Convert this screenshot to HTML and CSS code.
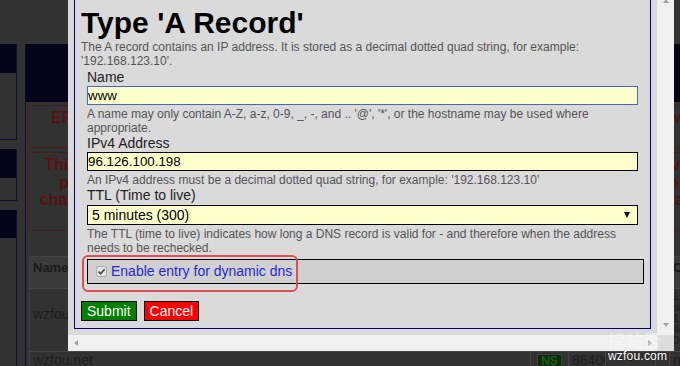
FILE: index.html
```html
<!DOCTYPE html>
<html>

<head>
    <meta charset="UTF-8">
    <meta name="viewport" content="width=device-width, initial-scale=1">
    <link rel="stylesheet" href="styles.css">
    <title>DNS records - wzfou.net</title>
</head>

<body>
    <div class="page">
        <div class="side">
            <div class="side-box">
                <div class="side-head"></div>
                <div class="side-body first"></div>
            </div>
            <div class="side-box">
                <div class="side-head"></div>
                <div class="side-body second"></div>
            </div>
            <div class="side-box last">
                <div class="side-head"></div>
                <div class="side-body"></div>
            </div>
        </div>

        <div class="main">
            <div class="banner"></div>
            <div class="notice error">ERROR: the name servers of this domain do not point to our DNS servers right now</div>
            <div class="notice warn">
                This domain is not using our name servers yet, so none of the records below are live.<br>
                please set them at your registrar, then wait for the name servers of this domain to<br>
                change to spread over the internet before testing the records below on this page again
            </div>

            <table class="records">
                <tr>
                    <th class="c-name">Name</th>
                    <th class="c-type">Type</th>
                    <th class="c-ttl">TTL</th>
                    <th class="c-prio">Prio</th>
                    <th class="c-weight"></th>
                    <th class="c-content">Content</th>
                </tr>
                <tr class="soa">
                    <td class="name">wzfou.net</td>
                    <td>SOA</td>
                    <td>86400</td>
                    <td class="dash">-</td>
                    <td></td>
                    <td class="content">1.wzfou.net<br>status<br>1:2019092901<br>4(14400)<br>0(3600)</td>
                </tr>
                <tr class="ns">
                    <td class="name">wzfou.net</td>
                    <td class="type"><span class="badge">NS</span></td>
                    <td>86400</td>
                    <td class="dash">-</td>
                    <td></td>
                    <td>ns1.linode.com</td>
                </tr>
            </table>
        </div>
    </div>

    <div class="dialog">
        <div class="viewport">
            <form class="record-form">
                <h1>Type 'A Record'</h1>
                <p class="intro">The A record contains an IP address. It is stored as a decimal dotted quad string, for example: '192.168.123.10'.</p>

                <div class="field">
                    <label for="recordName">Name</label>
                    <input type="text" id="recordName" class="text focused" value="www">
                    <p class="help">A name may only contain A-Z, a-z, 0-9, _, -, and .. '@', '*', or the hostname may be used where appropriate.</p>
                </div>

                <div class="field">
                    <label for="recordAddress">IPv4 Address</label>
                    <input type="text" id="recordAddress" class="text" value="96.126.100.198">
                    <p class="help">An IPv4 address must be a decimal dotted quad string, for example: '192.168.123.10'</p>
                </div>

                <div class="field">
                    <label for="recordTtl">TTL (Time to live)</label>
                    <div class="select">
                        <select id="recordTtl">
                            <option>5 minutes (300)</option>
                            <option>1 hour (3600)</option>
                            <option>1 day (86400)</option>
                        </select>
                    </div>
                    <p class="help">The TTL (time to live) indicates how long a DNS record is valid for - and therefore when the address needs to be rechecked.</p>

                    <div class="dyn-row">
                        <svg class="tick" width="11" height="11" viewBox="0 0 11 11">
                            <rect x="0.5" y="0.5" width="10" height="10" rx="2" fill="#e4e4e4" stroke="#a6a6a6" />
                            <path d="M2.6 5.6 L4.6 7.7 L8.6 3.2" fill="none" stroke="#4a4a4a" stroke-width="1.7" />
                        </svg>
                        <label class="dyn-label">Enable entry for dynamic dns</label>
                    </div>
                </div>

                <div class="actions">
                    <button type="button" class="submit">Submit</button>
                    <button type="button" class="cancel">Cancel</button>
                </div>
            </form>
        </div>
        <div class="vbar">
            <span class="arrow up"></span>
            <span class="arrow down"></span>
        </div>
        <div class="hbar">
            <span class="arrow left"></span>
            <span class="arrow right"></span>
        </div>
        <div class="corner"></div>

        <!-- red marker drawn over the dynamic dns row -->
        <div class="callout"></div>
    </div>

    <div class="watermark">
        <span class="cn">挖站否</span>
        <span class="site">wzfou.com</span>
    </div>
</body>

</html>
```

FILE: styles.css
```css
* {
    box-sizing: border-box;
}

body {
    margin: 0;
    height: 366px;
    overflow: hidden;
    position: relative;
    background: #323232;
    font-family: "Liberation Sans", Arial, sans-serif;
}

/* page behind the dialog, dimmed */

.page {
    display: flex;
    width: 709px;
    height: 366px;
    padding-top: 44px;
}

.side {
    width: 17px;
    flex: none;
    display: flex;
    flex-direction: column;
    gap: 9px;
}

.side-box {
    border-right: 1px solid #0c0c36;
    border-bottom: 1px solid #0c0c36;
}

.side-box.last {
    flex: 1;
    border-bottom: 0;
}

.side-head {
    height: 29px;
    background: #05041a;
}

.side-box.last .side-head {
    height: 28px;
}

.side-body.first {
    height: 66px;
}

.side-body.second {
    height: 22px;
}

.main {
    flex: 1;
    margin-left: 8px;
    border-left: 1px solid #0c0c36;
}

.banner {
    height: 58px;
    background: #05041a;
}

.notice {
    margin: 3px 0 0 3px;
    padding-top: 3px;
    border: 1px solid #4a1e1e;
    color: #5a1111;
    font-size: 16px;
    font-weight: bold;
    line-height: 17.5px;
    text-align: center;
    white-space: nowrap;
}

.notice.error {
    height: 43px;
}

.notice.warn {
    margin-top: 4px;
    height: 79px;
}

.records {
    margin: 25px 0 0 3px;
    width: 680px;
    table-layout: fixed;
    border-collapse: collapse;
    font-size: 14px;
    color: #1e1e1e;
}

.records th,
.records td {
    border: 1px solid #444;
    padding: 0 3px;
    text-align: left;
    vertical-align: top;
    white-space: nowrap;
    overflow: hidden;
}

.records th {
    height: 32px;
    padding-top: 3px;
    background: #3a3a3a;
    color: #1a1a1a;
    font-size: 13px;
    line-height: 15px;
}

.c-name { width: 501px; }
.c-type { width: 38px; }
.c-ttl { width: 37px; }
.c-prio { width: 50px; }
.c-weight { width: 14px; }

.records .soa td {
    height: 63px;
}

.records .soa .name {
    padding-top: 17px;
}

.records .content {
    padding-top: 2px;
    font-size: 11px;
    line-height: 11px;
}

.records .dash {
    text-align: center;
}

.records .ns td {
    line-height: 16px;
}

.records .type {
    text-align: center;
}

.badge {
    display: inline-block;
    margin-top: 1px;
    padding: 0 3px;
    border: 1px solid #3e3e3e;
    background: #082e08;
    color: #1d5a1d;
    font-size: 12px;
    font-weight: bold;
    line-height: 13px;
}

/* dialog */

.dialog {
    position: absolute;
    left: 68px;
    top: 0;
    width: 606px;
    height: 351px;
    display: grid;
    grid-template-columns: 589px 17px;
    grid-template-rows: 335px 16px;
    background: #f0f0f0;
}

.viewport {
    overflow: hidden;
    background: #dadada;
}

.record-form {
    width: 577px;
    margin-left: 6px;
    padding: 6px 6px 7px;
    border: 1px solid #000080;
    border-top: 0;
}

.record-form h1 {
    margin: 0;
    color: #000;
    font-size: 30px;
    line-height: 34px;
}

.intro,
.help {
    margin: 0;
    color: #555;
    font-size: 12px;
    line-height: 14px;
}

.intro {
    margin-bottom: 1px;
}

.help {
    margin-top: 2px;
}

.field {
    margin-left: 6px;
}

.field label {
    display: block;
    color: #222;
    font-size: 14px;
    line-height: 17px;
}

.text {
    display: block;
    width: 99%;
    height: 19px;
    margin: 0;
    padding: 0;
    border: 1px solid #000;
    border-radius: 0;
    background: #ffffcc;
    color: #000;
    font-family: "Liberation Sans", Arial, sans-serif;
    font-size: 13.33px;
    outline: none;
}

.text.focused {
    border-color: #3d6db5;
}

.select {
    position: relative;
    width: 99%;
    margin-top: 1px;
}

.select select {
    display: block;
    width: 100%;
    height: 20px;
    padding: 0 0 0 4px;
    border: 1px solid #000;
    border-radius: 0;
    appearance: none;
    background: #ffffcc;
    color: #000;
    font-family: "Liberation Sans", Arial, sans-serif;
    font-size: 14px;
}

.select::after {
    content: "";
    position: absolute;
    right: 8px;
    top: 7px;
    border-left: 3.5px solid transparent;
    border-right: 3.5px solid transparent;
    border-top: 6px solid #000;
}

.dyn-row {
    display: flex;
    align-items: center;
    gap: 4px;
    height: 25px;
    margin-top: 4px;
    padding-left: 8px;
    border: 1px solid #000;
    background: #d0d0d0;
}

.tick {
    display: block;
    flex: none;
}

.field .dyn-label {
    display: inline;
    color: #2828d4;
    font-size: 14px;
}

.actions {
    display: flex;
    gap: 7px;
    margin-top: 17px;
}

.actions button {
    height: 20px;
    padding: 0 5px;
    border: 1px solid #000;
    border-radius: 0;
    color: #fff;
    font-family: "Liberation Sans", Arial, sans-serif;
    font-size: 14px;
    line-height: 18px;
}

.submit {
    background: #008000;
}

.cancel {
    background: #ff0000;
}

.vbar {
    display: flex;
    flex-direction: column;
    align-items: center;
    justify-content: space-between;
    padding-bottom: 8px;
    background: #f0f0f0;
}

.hbar {
    display: flex;
    align-items: center;
    justify-content: space-between;
    padding: 0 5px 0 6px;
    background: #f0f0f0;
}

.corner {
    background: #dcdcdc;
}

.arrow {
    display: block;
    width: 0;
    height: 0;
}

.arrow.up {
    margin-top: -1px;
    border-left: 3.5px solid transparent;
    border-right: 3.5px solid transparent;
    border-bottom: 4px solid #a3a3a3;
}

.arrow.down {
    border-left: 3.5px solid transparent;
    border-right: 3.5px solid transparent;
    border-top: 4px solid #a3a3a3;
}

.arrow.left {
    border-top: 3px solid transparent;
    border-bottom: 3px solid transparent;
    border-right: 4px solid #a3a3a3;
}

.arrow.right {
    border-top: 3px solid transparent;
    border-bottom: 3px solid transparent;
    border-left: 4px solid #a3a3a3;
}

.callout {
    position: absolute;
    left: 14px;
    top: 255px;
    width: 216px;
    height: 37px;
    border: 2px solid #de4f4f;
    border-radius: 6px;
}

.watermark {
    position: absolute;
    left: 608px;
    top: 331px;
    display: flex;
    flex-direction: column;
    color: #fff;
}

.watermark .cn {
    font-family: "Noto Sans CJK SC", sans-serif;
    font-size: 17px;
    font-weight: bold;
    line-height: 18px;
    letter-spacing: 1px;
    opacity: 0.35;
}

.watermark .site {
    font-size: 12px;
    line-height: 14px;
    letter-spacing: 0.2px;
    text-shadow: 0 0 2px rgba(0, 0, 0, 0.4);
}
```
